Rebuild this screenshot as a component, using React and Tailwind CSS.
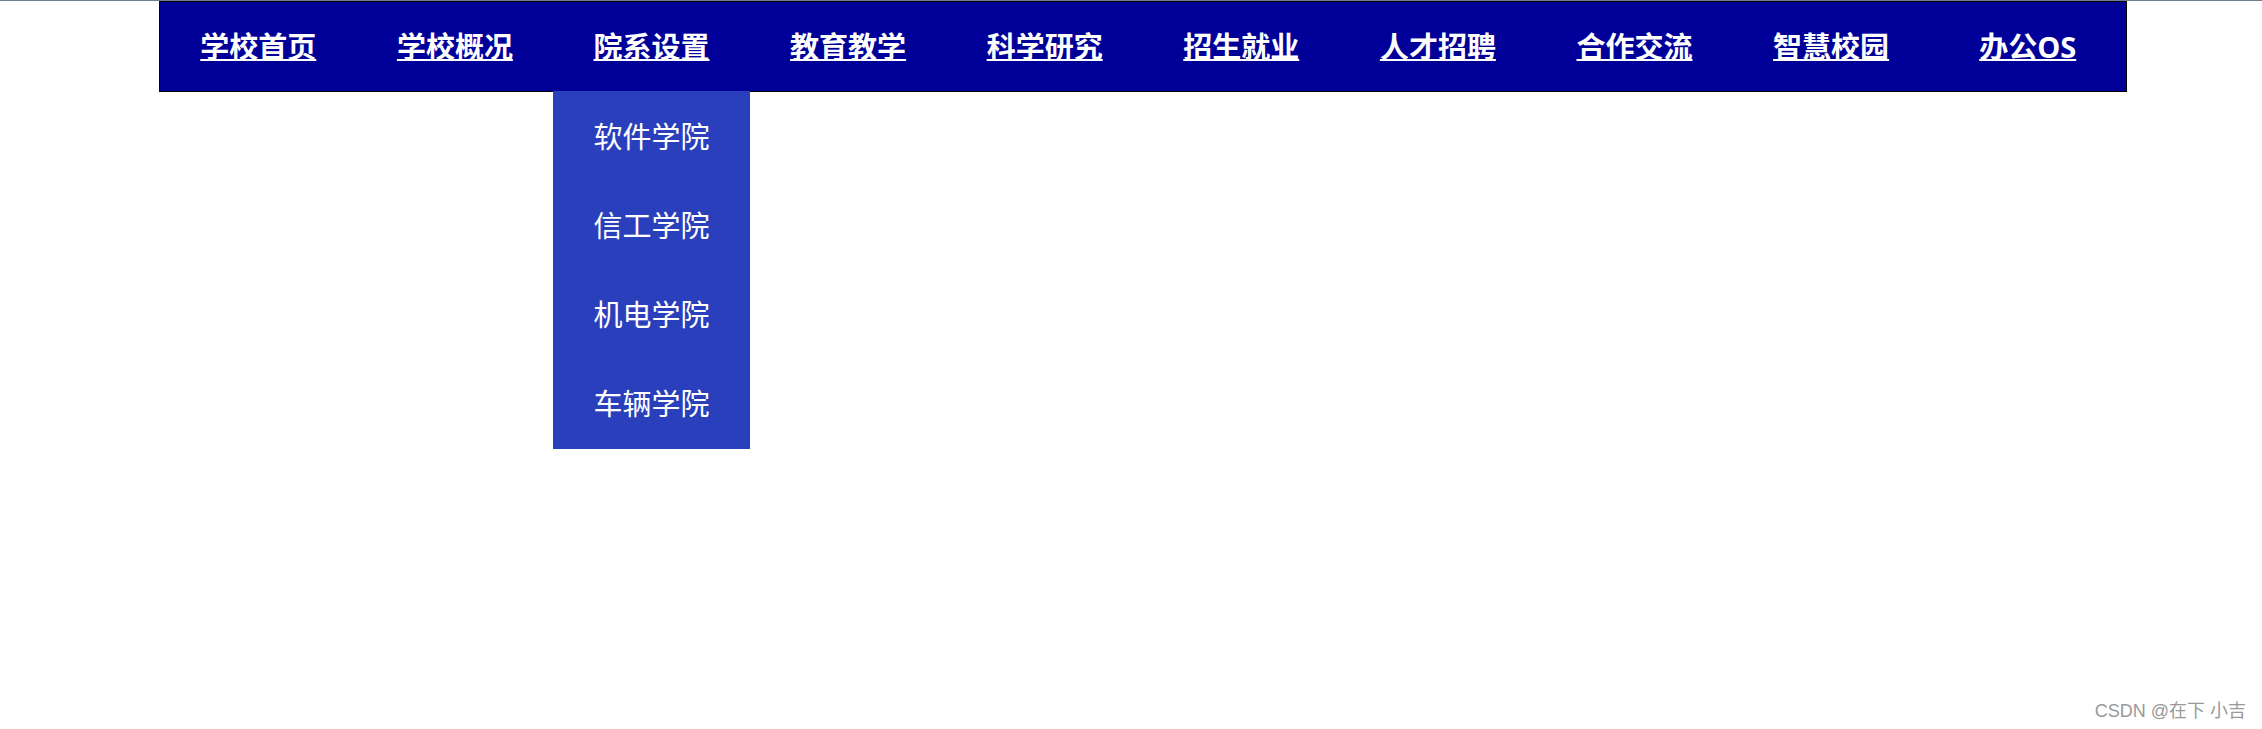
import React, { useState } from 'react';

const menuItems = [
  { label: '学校首页', href: '#' },
  { label: '学校概况', href: '#' },
  {
    label: '院系设置',
    href: '#',
    children: [
      { label: '软件学院', href: '#' },
      { label: '信工学院', href: '#' },
      { label: '机电学院', href: '#' },
      { label: '车辆学院', href: '#' }
    ]
  },
  { label: '教育教学', href: '#' },
  { label: '科学研究', href: '#' },
  { label: '招生就业', href: '#' },
  { label: '人才招聘', href: '#' },
  { label: '合作交流', href: '#' },
  { label: '智慧校园', href: '#' },
  { label: '办公OS', href: '#' }
];

const Navigation = () => {
  const [openMenu, setOpenMenu] = useState('院系设置');

  return (
    <nav className="bg-[#000099] border border-black text-white text-[29px] leading-[89px]">
      <ul className="grid grid-cols-10">
        {menuItems.map((item) => (
          <li
            key={item.label}
            className="relative text-center"
            onMouseEnter={() => setOpenMenu(item.label)}
          >
            <a
              href={item.href}
              className="font-bold underline decoration-2 underline-offset-1 [text-decoration-skip-ink:none]"
            >
              {item.label}
            </a>
            {item.children && openMenu === item.label && (
              <ul className="absolute top-full left-0 w-full py-px bg-[#2a3fbc]">
                {item.children.map((child) => (
                  <li key={child.label}>
                    <a href={child.href} className="block hover:bg-[#000099]">
                      {child.label}
                    </a>
                  </li>
                ))}
              </ul>
            )}
          </li>
        ))}
      </ul>
    </nav>
  );
};

const App = () => {
  return (
    <div className="relative min-h-screen bg-white border-t border-[#708090] font-['Open_Sans','Noto_Sans_CJK_SC',sans-serif]">
      <header className="pl-[159px] pr-[135px]">
        <Navigation />
      </header>
      <p className="absolute bottom-2 right-4 text-lg leading-5 text-[#999999] font-['Liberation_Sans','Noto_Sans_CJK_SC',sans-serif]">
        CSDN @在下 小吉
      </p>
    </div>
  );
};

export default App;
